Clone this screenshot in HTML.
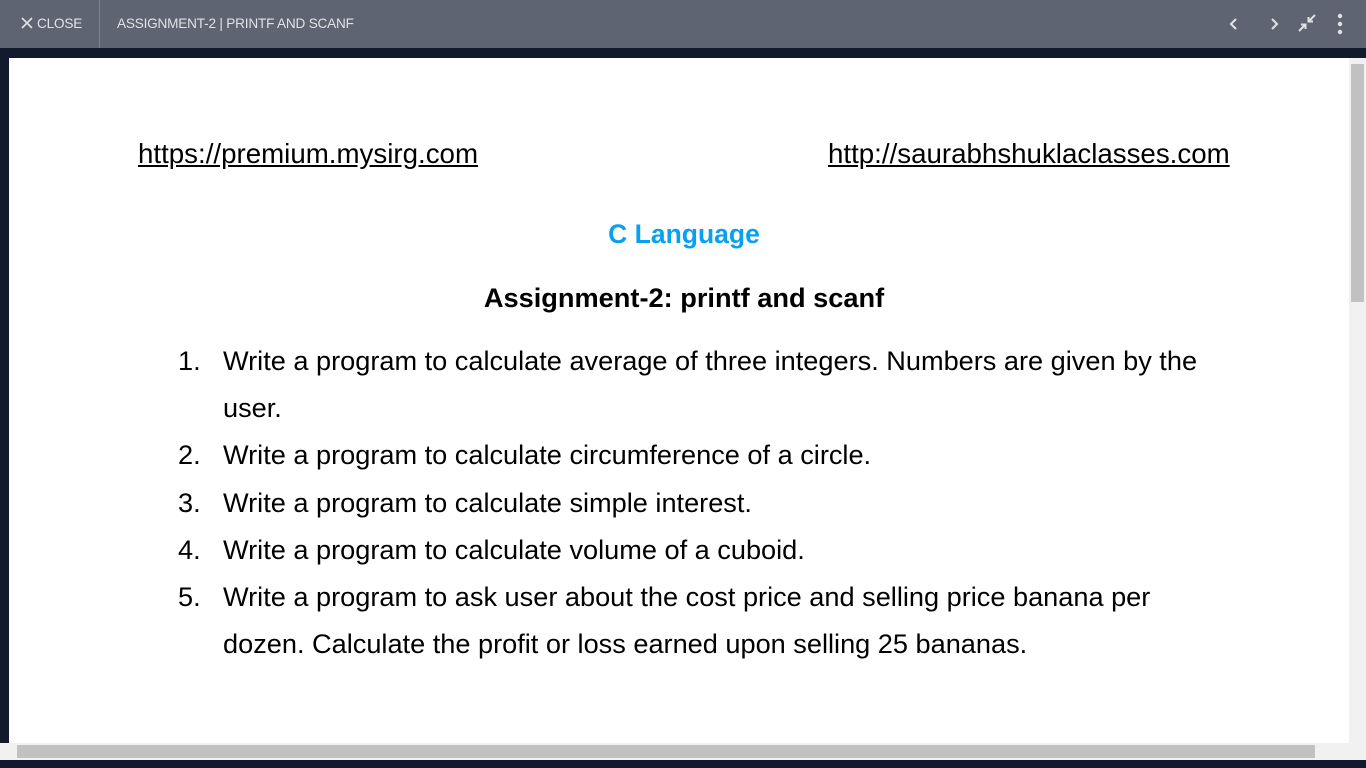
<!DOCTYPE html>
<html><head><style>
body{margin:0;width:1366px;height:768px;background:#131a2e;position:relative;overflow:hidden;font-family:"Liberation Sans",sans-serif}
.top{position:absolute;left:0;top:0;width:1366px;height:48px;background:#5f6472;color:#e0e2e7;font-size:13.6px}
.close{position:absolute;left:20px;top:16px;letter-spacing:-0.2px}
.sep{position:absolute;left:99px;top:0;width:1px;height:48px;background:#80848f}
.title{position:absolute;left:117px;top:16px;letter-spacing:-0.2px}
.page{position:absolute;left:9px;top:58px;width:1340px;height:685px;background:#fff;color:#000}
.vs{position:absolute;left:1349px;top:58px;width:17px;height:685px;background:#f1f1f1}
.vt{position:absolute;left:1351px;top:64px;width:13px;height:238px;background:#c1c1c1}
.hs{position:absolute;left:0;top:743px;width:1366px;height:17px;background:#f1f1f1}
.ht{position:absolute;left:17px;top:745px;width:1298px;height:13px;background:#c1c1c1}
a{color:#000;text-decoration:underline;font-size:27.7px;position:absolute;top:80px}
.cl{position:absolute;left:0;width:1350px;text-align:center;top:161px;font-size:26.5px;font-weight:bold;color:#09a0ef}
.as{position:absolute;left:0;width:1350px;text-align:center;top:224px;font-size:27.2px;font-weight:bold}
ol{position:absolute;left:214px;top:279px;margin:0;padding:0;width:1000px;font-size:27.15px;line-height:47.2px;list-style:none}
li{position:relative}
li span{position:absolute;left:-45px}
</style></head><body>
<div class="top">
<div class="close"><svg width="14" height="14" viewBox="0 0 14 14" style="vertical-align:-2px;margin-right:3px"><path d="M2 2L12 12M12 2L2 12" stroke="#e0e2e7" stroke-width="1.6"/></svg>CLOSE</div>
<div class="sep"></div>
<div class="title">ASSIGNMENT-2 | PRINTF AND SCANF</div>
<svg style="position:absolute;left:1226px;top:16px" width="16" height="16" viewBox="0 0 16 16"><path d="M10 3L5 8L10 13" fill="none" stroke="#e0e2e7" stroke-width="2"/></svg>
<svg style="position:absolute;left:1266px;top:16px" width="16" height="16" viewBox="0 0 16 16"><path d="M6 3L11 8L6 13" fill="none" stroke="#e0e2e7" stroke-width="2"/></svg>
<svg style="position:absolute;left:1297px;top:13px" width="20" height="20" viewBox="0 0 20 20"><path d="M2 18L8 12M4 11.5H8.5V16M18 2L12 8M16 8.5H11.5V4" fill="none" stroke="#e0e2e7" stroke-width="2"/></svg>
<svg style="position:absolute;left:1336px;top:12px" width="8" height="24" viewBox="0 0 8 24"><circle cx="4" cy="4" r="2.2" fill="#e0e2e7"/><circle cx="4" cy="12" r="2.2" fill="#e0e2e7"/><circle cx="4" cy="20" r="2.2" fill="#e0e2e7"/></svg>
</div>
<div class="page">
<a style="left:129px">https://premium.mysirg.com</a>
<a style="left:819px">http://saurabhshuklaclasses.com</a>
<div class="cl">C Language</div>
<div class="as">Assignment-2: printf and scanf</div>
<ol>
<li><span>1.</span>Write a program to calculate average of three integers. Numbers are given by the user.</li>
<li><span>2.</span>Write a program to calculate circumference of a circle.</li>
<li><span>3.</span>Write a program to calculate simple interest.</li>
<li><span>4.</span>Write a program to calculate volume of a cuboid.</li>
<li><span>5.</span>Write a program to ask user about the cost price and selling price banana per dozen. Calculate the profit or loss earned upon selling 25 bananas.</li>
</ol>
</div>
<div class="vs"></div><div class="vt"></div>
<div class="hs"></div><div class="ht"></div>
</body></html>
